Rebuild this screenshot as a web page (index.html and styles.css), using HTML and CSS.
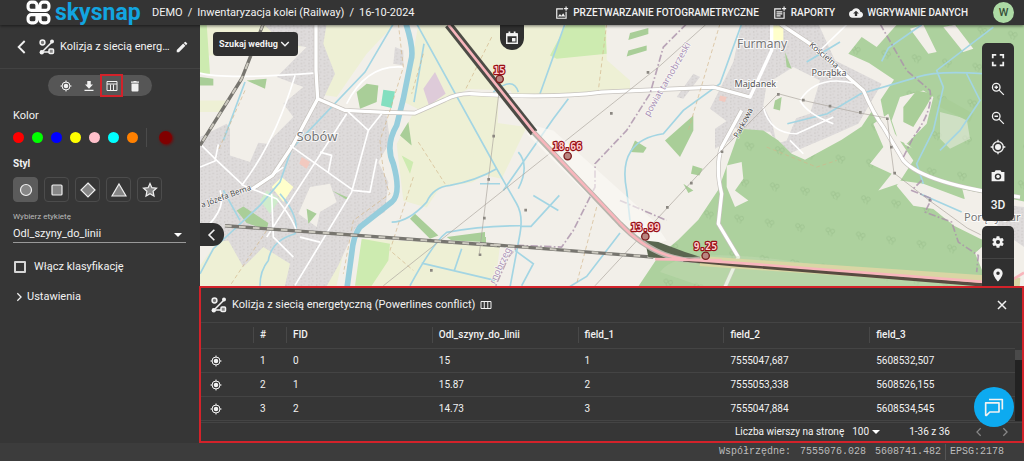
FILE: index.html
```html
<!DOCTYPE html>
<html lang="pl">
<head>
<meta charset="utf-8">
<title>SkySnap</title>
<link rel="stylesheet" href="styles.css">
</head>
<body>
<svg class="defs" aria-hidden="true">
  <symbol id="target" viewBox="0 0 24 24"><circle cx="12" cy="12" r="8" fill="none" stroke="currentColor" stroke-width="2"/><circle cx="12" cy="12" r="4.5" fill="currentColor"/><path d="M12 1v4M12 19v4M1 12h4M19 12h4" stroke="currentColor" stroke-width="2"/></symbol>
  <symbol id="layer" viewBox="0 0 16 16"><g fill="none" stroke="currentColor" stroke-width="1.5"><circle cx="3.5" cy="3.5" r="2.4" fill="#777"/><path d="M3 13 13 3M5 13h5"/><rect x="10" y="10" width="4.5" height="4.5" rx="1" fill="#888"/></g><circle cx="13" cy="2.5" r="2" fill="currentColor"/><circle cx="2.8" cy="13.2" r="2.2" fill="currentColor"/></symbol>
  <symbol id="left" viewBox="0 0 24 24"><path d="M16 3 7 12l9 9" fill="none" stroke="currentColor" stroke-width="2.800"/></symbol>
  <symbol id="right" viewBox="0 0 24 24"><path d="m8 3 9 9-9 9" fill="none" stroke="currentColor" stroke-width="3"/></symbol>
</svg>

<header class="topbar">
  <a class="brand" href="#">
    <svg class="brand-mark" viewBox="0 0 24 24" fill="none" stroke="#fff" stroke-width="3"><path d="M10.500 10H5a3 3 0 0 1-3-3V5a3 3 0 0 1 3-3h2.500a3 3 0 0 1 3 3zM13.500 10H19a3 3 0 0 0 3-3V5a3 3 0 0 0-3-3h-2.500a3 3 0 0 0-3 3zM10.500 14H5a3 3 0 0 0-3 3V19a3 3 0 0 0 3 3h2.500a3 3 0 0 0 3-3zM13.500 14H19a3 3 0 0 1 3 3V19a3 3 0 0 1-3 3h-2.500a3 3 0 0 1-3-3z"/></svg>
    <span class="brand-name">skysnap</span>
  </a>
  <nav class="crumbs"><a href="#">DEMO</a><span>/</span><a href="#">Inwentaryzacja kolei (Railway)</a><span>/</span><a href="#">16-10-2024</a></nav>
  <nav class="actions">
    <a href="#"><svg viewBox="0 0 24 24" fill="none" stroke="currentColor" stroke-width="2"><path d="M14 5H3v16h16V10"/><path d="M19 1v7M15.500 4.500h7"/><path d="m5 18 3.500-4.500 2.500 3 3-4 3.500 5.500z" fill="currentColor" stroke="none"/></svg>PRZETWARZANIE FOTOGRAMETRYCZNE</a>
    <a href="#"><svg viewBox="0 0 24 24" fill="none" stroke="currentColor" stroke-width="2"><path d="M14 5H3v16h16V10"/><path d="M19 1v7M15.500 4.500h7M6 10h10M6 13.500h10M6 17h7"/></svg>RAPORTY</a>
    <a href="#"><svg viewBox="0 0 24 24" fill="currentColor"><path d="M19.350 10.040A7.490 7.490 0 0 0 12 4C9.110 4 6.600 5.640 5.350 8.040A5.994 5.994 0 0 0 0 14c0 3.310 2.690 6 6 6h13c2.760 0 5-2.240 5-5 0-2.640-2.050-4.780-4.650-4.960zM14 13v4h-4v-4H7l5-5 5 5h-3z"/></svg>WGRYWANIE DANYCH</a>
    <button class="avatar">W</button>
  </nav>
</header>

<main class="workspace">
  <aside class="sidebar">
    <div class="layer-head">
      <button class="icon-btn" aria-label="Wstecz"><svg class="i16"><use href="#left"/></svg></button>
      <svg class="i16"><use href="#layer"/></svg>
      <h1>Kolizja z siecią energ…</h1>
      <button class="icon-btn" aria-label="Edytuj"><svg class="i14" viewBox="0 0 24 24" fill="currentColor"><path d="M3 17.250V21h3.750L17.810 9.940l-3.750-3.750L3 17.250zM20.710 7.040a1 1 0 0 0 0-1.410l-2.340-2.340a1 1 0 0 0-1.410 0l-1.830 1.830 3.750 3.750 1.830-1.830z"/></svg></button>
    </div>
    <div class="layer-tools">
      <div class="pill">
        <button aria-label="Centruj"><svg class="i12"><use href="#target"/></svg></button>
        <button aria-label="Pobierz"><svg class="i12" viewBox="0 0 24 24" fill="currentColor"><path d="M20 9h-4.500V2h-7v7H4l8 8.500zM3 19.500h18V22H3z"/></svg></button>
        <button class="marked" aria-label="Tabela"><svg class="i12" viewBox="0 0 24 24" fill="none" stroke="currentColor" stroke-width="2"><path d="M2 3h20v18H2zM2 8h20M9 9v12M15 9v12"/></svg></button>
        <button aria-label="Usuń"><svg class="i12" viewBox="0 0 24 24" fill="currentColor"><path d="M5 7h14v14a2 2 0 0 1-2 2H7a2 2 0 0 1-2-2zM4 3h4.500l1-1h5l1 1H20v2.500H4z"/></svg></button>
      </div>
    </div>
    <section class="settings">
      <h2 class="plain">Kolor</h2>
      <div class="colors">
        <button class="dot red" aria-label="Czerwony"></button><button class="dot green" aria-label="Zielony"></button><button class="dot blue" aria-label="Niebieski"></button><button class="dot yellow" aria-label="Żółty"></button><button class="dot pink" aria-label="Różowy"></button><button class="dot cyan" aria-label="Turkusowy"></button><button class="dot orange" aria-label="Pomarańczowy"></button>
        <span class="rule"></span><button class="dot current" aria-label="Własny kolor"></button>
      </div>
      <h2>Styl</h2>
      <div class="shapes">
        <button class="on" aria-label="Koło"><svg viewBox="0 0 16 16"><circle cx="8" cy="8" r="5.500"/></svg></button>
        <button aria-label="Kwadrat"><svg viewBox="0 0 16 16"><rect x="3" y="3" width="10" height="10" rx="1"/></svg></button>
        <button aria-label="Romb"><svg viewBox="0 0 16 16"><path d="m8 1 7 7-7 7-7-7z"/></svg></button>
        <button aria-label="Trójkąt"><svg viewBox="0 0 16 16"><path d="m8 2 7 12H1z"/></svg></button>
        <button aria-label="Gwiazda"><svg viewBox="0 0 16 16"><path d="m8 1.500 1.900 4.200 4.600.5-3.400 3.100.9 4.700-4-2.300L4 14l.9-4.700L1.500 6.200l4.600-.5z"/></svg></button>
      </div>
      <label class="field-label" for="label">Wybierz etykietę</label>
      <div class="select-wrap"><select id="label"><option>Odl_szyny_do_linii</option></select><i class="caret"></i></div>
      <label class="check"><input type="checkbox">Włącz klasyfikację</label>
      <button class="more"><svg class="i10"><use href="#right"/></svg>Ustawienia</button>
    </section>
  </aside>

  <div class="content">
    <div class="map">
      <svg class="canvas" viewBox="0 3 2472 783" preserveAspectRatio="xMidYMid slice">
        <defs>
          <pattern id="specks" width="23" height="19" patternUnits="userSpaceOnUse"><rect width="23" height="19" fill="#dedbdb"/><path d="M3 3h4v5H3zM14 10h5v4h-5zM12 1h3v4h-3zM4 13h4v3H4z" fill="#d1cdcc"/></pattern>
          <pattern id="trees" width="92" height="110" patternUnits="userSpaceOnUse" patternTransform="rotate(8)"><rect width="92" height="110" fill="#add19e"/><g fill="none" stroke="#98bf8a" stroke-width="2"><circle cx="20" cy="20" r="6"/><circle cx="34" cy="22" r="6"/><path d="M20 26l5 10M34 28l-2 10"/></g></pattern>
        </defs>
        <rect y="-40" width="2472" height="880" fill="#f2efe9"/>
        <!-- fields -->
        <g class="farm">
          <path d="M0 0h325v60L230 95H0zM0 230h85L60 265H0zM370 0h215L500 90l-90 130-60-10-8-80z"/>
          <path d="M655 0h565l-65 208-350-12-130 70-60-30z"/>
          <path d="M640 268l160-62 95 10-5 220-75 40-95 15-40 60-70-20-20-170z"/>
          <path d="M80 615l360 25-30 146H0v-60zM490 645l410 20-15 121H470z"/>
          <path d="M1220 0v205l-280 15-90-220zM840 290l-30 155 95 20 75-155z"/>
          <path d="M1070 120l140-20 80 70v35l-220 10z"/>
        </g>
        <g class="meadow">
          <path d="M0 0h20l10 150H0zM485 645l85 15-5 50-50 76h-50zM1100 0h115l5 90-150 15-20-10zM605 395l35 20-10 35z"/>
        </g>
        <!-- built-up areas -->
        <g fill="url(#specks)">
          <path d="M190 0h190l-10 60 35 90-35 75 80 35 110 15 10 80-35 60 30 60-10 90-90 50-50 110-70 125H240l30-130-80-50-60 60-45-80-85 10V420l120-70 80 10 80-80-30-40 60-50-80-30 90-90-70-10z"/>
          <path d="M585 70l25 10v45l-30-5zM1625 0h230l50 110 140 70-70 120-90 40-130 55-45-70-100-10-80-60 70-140z"/>
          <path d="M1480 150l20 10-50 65-20-5zM1545 315l45-30 10 60-55 30z"/>
          <path d="M0 340l80-40 35 55-30 60-85 20z"/>
        </g>
        <g fill="#f2efe9">
          <path d="M90 300l50-60 70 35-60 140-60-20zM330 490l60-10 20 55-50 30-10 45-55-40zM1700 180l80-50 80 40-30 100-110 35-30-60zM1715 290l65-70 10 60-30 70-30 10z"/>
        </g>
        <!-- forest -->
        <g fill="url(#trees)">
          <path d="M1620 315l70 5 45 30 40 40 40 18 110-60 60-40 30-45 80 60 20 40 100 45 60 40 20 80 110 90-80 70 60 145H1285l90-135 60-50 60-60 60-90z"/>
          <path d="M1945 90l40-50 45 30 60-67h382v530l-150-30-55-10-90-50-30-60-90-80-15-75 40-60-75-50z"/>
        </g>
        <g fill="#f2efe9">
          <path d="M2130 15l55 75 25-5-40-82zM2230 10l60 75 30-10-55-72zM2020 300l45-30 20 60 55 80-45 70-60 20 40-50-65-30 40-50zM2100 220l70-20 30 20-20 80-60 60-25-10-20-60zM1580 425l45-10 5 50-25 35 40 30-40 20-25-60z"/>
          <path d="M2100 470l70 10 120 45 182 15v146l-130-40-80-40-62-50-60-10-50-60z"/>
          <path d="M2220 265l80 20 10 60-60 30-30-30z" opacity=".5"/>
        </g>
        <path d="M2345 535l127 15v120l-70-50z" fill="url(#specks)"/>
        <g class="wood">
          <path d="M500 180l35 5-5 50-50 20-10-50zM625 295l10 70-35-30zM140 170l60-5-5 30zM740 640l115-15v30l-100-5zM320 555l30 15-25 30zM110 560l20-12 75 50-5 20-60-20zM645 570l70 65-25 10-60-60zM395 500l50 22-5 6z"/>
          <path d="M1290 28l55-15v18l-60 18zM1285 80l55-15v15l-60 18zM1290 385l15-35 35 22-10 15zM1395 350l85-75v45l-40 80zM1478 425l30 10-10 20-25-5zM1450 480l30 20-15 8zM1755 85l20 50-15-5zM1725 230l20-10-5 40-20-5zM0 160l40 5v20H0zM840 640h18v25h-18z"/>
          <path d="M2110 250l40-50 50 10-20 35-40 65-30-15zM2230 220l90 50-10 25-100-50z"/>
        </g>
        <path d="M550 198l35 5-10 50-32-8z" fill="#83dfc0"/>
        <path d="M670 195l35-50 32 65-50 35z" fill="#decbd9"/>
        <path d="M215 490l30-30 35 30-30 45zM1712 5h38v45h-38z" fill="#ffffcb"/>
        <path d="M305 400l25 15-10 20-22-15zM1560 215l20 5-5 15-18-5z" fill="#f2c9bf"/>
        <path d="M180 530l20-30 40 25-30 45z" fill="#cfeccc"/>
        <!-- water -->
        <g class="water">
          <path class="river" d="M618 0q25 80 15 110l-23 115-20 80q-35 60-10 115 25 90-5 115l-95 75q-20 25-25 80l-15 110"/>
          <path d="M580 0l-85 145-220 230-35 100-60 70L40 675 0 750M70 500l50 90M650 0l240 435 60 105q20 35 10 90l-30 160M672 60l-30 175M575 595q50 0 105-60 20-45 70-50 80-15 140-50M630 786q70-130 110-160 100-20 220-20M665 718l220 52M785 675l-22 65M135 175L70 350M240 510q60 70 45 120-70 20-80 80-25 30-25 76"/>
          <path d="M1095 0l-75 210M1105 225l-45 60-150 215M955 385q35 40 0 110M840 480h60M1000 515l75 45M1078 515l-85 93h-33M1260 628l-100 130-50 30M945 680l55 40-35 66M1625 0l-65 180-110 80-60 70q-140 20-110 170l10 90M880 205q60-50 75 0"/>
          <path d="M2165 3l-100 70-20 40M2380 10L2210 140l20 50-30 130-50 100 20 60M2352 150q-140-10-200 10l-170 50-100 60-120 30M2300 150l40 80-60 90-60 60M1820 115l100-60M2160 510l125 55"/>
        </g>
        <!-- roads -->
        <g class="road-edge"><path d="M348 0v140l5 85 82 35 120 6 90 2 90-40q40-20 80-18 240 15 390-5l335-15 110 30M353 225l-75 140-60 90-60 40M1740 0l90 60 160 140q30 70 60 110l60 100q60 70 350 110M1625 260l-60 110q-20 60 0 140l-10 90 60 100-40 90"/></g>
        <g class="road"><path d="M348 0v140l5 85 82 35 120 6 90 2 90-40q40-20 80-18 240 15 390-5l335-15 110 30 65-140V0M353 225l-75 140-60 90-60 40M1740 0l90 60 160 140q30 70 60 110l60 100q60 70 350 110M1625 260l-60 110q-20 60 0 140l-10 90 60 100-40 90"/></g>
        <g class="street"><path d="M0 148q70 20 340 0M285 155q-60 200-160 330M0 360l50 50 80 75 100 40q50 60 60 100M0 430l45-18 10-50M440 270l-240 370M440 260l65 60 40-50M505 320l-50 185-170 280M270 365l190 135 50 5 20-100M360 385l35 10-10 50M215 510l5 130 60 60M300 640l60 15M170 490l80-60M440 240q60-120 170-110M1800 230q50-80 170-50M1800 230q20 40 100 70M1690 250q20 80 100 80l110-50M1770 350l40 40M1850 90l90-87M20 610q60-60 40-110"/></g>
        <!-- footpaths and boundaries -->
        <g class="path"><path d="M595 0l15 130-40 130-30 90q10 120 30 160l-110 80-30 160M655 355l80 125M640 460l-70 220 70 60M135 200L55 380M200 620L90 786M1220 0l-25 200M1560 0l-95 320M1190 550l-60 230M670 90l-35 120M875 40l-80 160M1700 370l150 60 60-20"/></g>
        <g class="power"><path d="M900 180l-62 510M550 786l830-660 140-126M1735 210l-210 210-340 366M1735 210l75 20 80 18 90 20 82 15 10 90 10 75 110 85 110 80 40 20"/></g>
        <g fill="#8b8781"><path d="M877 333h8v8h-8zM862 463h8v8h-8zM849 579h8v8h-8zM836 689h8v8h-8zM690 736h8v8h-8zM1230 265h8v8h-8zM973 555h8v8h-8zM1340 142h8v8h-8zM1562 380h8v8h-8zM1470 474h8v8h-8zM1398 547h8v8h-8zM1731 208h8v8h-8zM1806 225h8v8h-8zM1886 243h8v8h-8zM1977 262h8v8h-8zM2058 281h8v8h-8zM2070 366h8v8h-8zM2080 444h8v8h-8zM2186 525h8v8h-8z"/></g>
        <g class="border"><path d="M1460 0l-70 70-40 140-70 110-95 100v70l-65 130-35 50-130-5-30 35-40 90M2040 0l80 140 70 60q10 60-50 140l-30 60M2165 470l-30 30 60 25-20 40 80 30 20 60 60 40-5 50M1260 530l140 60"/></g>
        <!-- railways -->
        <path class="rail" d="M190 0l-65 165L0 365M75 606l825 60M840 660l520 40"/>
        <path class="rail-dash" d="M190 0l-65 165L0 365M75 606l825 60M840 660l520 40"/>
        <path d="M980 330l20-25 60 15 300 270 40 60-60 20-190-170z" fill="#fbfaf7" opacity=".6"/>
        <path d="M1335 650l40 5 80 30 80 25-30 10-160-20z" fill="#5a6650"/>
        <path d="M1380 745q60-90 480-20l490 35v26H1500z" fill="#c5dcb5" opacity=".4"/>
        <path d="M745 3L1002 327" stroke="#4c4c46" stroke-width="25"/>
        <path d="M1000 325l260 275q120 120 240 108" fill="none" stroke="#b8b4ac" stroke-width="16"/>
        <path d="M1500 712l960 65" fill="none" stroke="#d9d6a4" stroke-width="30"/>
        <path d="M1450 708l170 16 740 60" fill="none" stroke="#574b40" stroke-width="11"/>
        <path d="M745 3l255 320 260 275q100 112 240 112l120 8 740 57M1365 706l200 4M2430 772l42-25" class="track"/>
        <!-- place names -->
        <g class="place"><text x="351" y="352" font-size="39">Sobów</text><text x="1686" y="74" font-size="36">Furmany</text><text x="2377" y="592" font-size="33">Poręby-Fur</text></g>
        <g class="hamlet"><text x="1666" y="191">Majdanek</text><text x="1887" y="157">Porąbka</text></g>
        <g class="streetname"><text transform="translate(6 552)rotate(-20)">a Józefa Bema</text><text transform="translate(1614 344)rotate(-62)">Parkowa</text><text transform="translate(1826 66)rotate(40)">Kościelna</text></g>
        <g class="county"><text transform="translate(1347 280)rotate(-60)">powiat tarnobrzeski</text><text transform="translate(884 782)rotate(-65)">rnobrzeg</text></g>
        <!-- measurements -->
        <g class="point"><circle cx="899" cy="166" r="11"/><circle cx="1103" cy="397" r="11"/><circle cx="1336" cy="638" r="11"/><circle cx="1517" cy="696" r="11"/></g>
        <g class="value"><text x="898" y="150">15</text><text x="1102" y="380">18.66</text><text x="1336" y="622">13.99</text><text x="1516" y="679">9.25</text></g>
      </svg>
      <button class="search-by">Szukaj według<svg class="i10" viewBox="0 0 24 24"><path d="m3 7 9 9 9-9" fill="none" stroke="currentColor" stroke-width="3.500"/></svg></button>
      <button class="calendar" aria-label="Kalendarz"><svg class="i14" viewBox="0 0 24 24"><path d="M3 5h18v16H3z" fill="none" stroke="currentColor" stroke-width="2.500"/><path d="M3 4h18v5H3zM6 1h3v4H6zM15 1h3v4h-3zM12 12h6v6h-6z" fill="currentColor"/></svg></button>
      <button class="collapse" aria-label="Zwiń"><svg class="i14"><use href="#left"/></svg></button>
      <div class="map-tools">
        <div class="group">
          <button aria-label="Pełny ekran"><svg viewBox="0 0 24 24" fill="none" stroke="currentColor" stroke-width="3"><path d="M3 9V3h6M15 3h6v6M21 15v6h-6M9 21H3v-6"/></svg></button>
          <button aria-label="Przybliż"><svg viewBox="0 0 24 24" fill="none" stroke="currentColor" stroke-width="2.200"><circle cx="9" cy="9" r="6.500"/><path d="m14 14 8 8M6 9h6M9 6v6"/></svg></button>
          <button aria-label="Oddal"><svg viewBox="0 0 24 24" fill="none" stroke="currentColor" stroke-width="2.200"><circle cx="9" cy="9" r="6.500"/><path d="m14 14 8 8M6 9h6"/></svg></button>
          <button aria-label="Moja pozycja"><svg class="locate"><use href="#target"/></svg></button>
          <button aria-label="Zrzut"><svg viewBox="0 0 24 24"><path d="M8 2 6 5H1v16h22V5h-5l-2-3zM12 7.500a5.500 5.500 0 1 1 0 11 5.500 5.500 0 0 1 0-11z" fill="currentColor" fill-rule="evenodd"/><circle cx="12" cy="13" r="3" fill="currentColor"/></svg></button>
          <button>3D</button>
        </div>
        <div class="group second">
          <button aria-label="Ustawienia mapy"><svg viewBox="0 0 24 24" fill="currentColor"><path d="M19.430 12.980a7.800 7.800 0 0 0 0-1.960l2.110-1.650c.19-.15.24-.42.12-.64l-2-3.460a.5.5 0 0 0-.61-.22l-2.490 1a7.300 7.300 0 0 0-1.690-.98l-.38-2.650A.49.49 0 0 0 14 2h-4a.49.49 0 0 0-.49.420l-.38 2.650c-.61.250-1.170.590-1.690.980l-2.490-1a.5.5 0 0 0-.61.220l-2 3.460a.5.5 0 0 0 .12.640l2.110 1.650a7.900 7.900 0 0 0 0 1.960l-2.110 1.650a.5.5 0 0 0-.12.640l2 3.460c.12.220.39.300.61.220l2.490-1c.52.400 1.080.730 1.690.980l.38 2.650c.03.240.24.420.49.420h4c.25 0 .46-.18.49-.42l.38-2.650a7.300 7.300 0 0 0 1.690-.98l2.490 1c.23.090.49 0 .61-.22l2-3.460a.5.5 0 0 0-.12-.64zM12 15.500a3.500 3.500 0 1 1 0-7 3.500 3.500 0 0 1 0 7z"/></svg></button>
          <button aria-label="Znacznik"><svg viewBox="0 0 24 24" fill="currentColor"><path d="M12 1a8 8 0 0 0-8 8c0 6 8 14 8 14s8-8 8-14a8 8 0 0 0-8-8zm0 11a3 3 0 1 1 0-6 3 3 0 0 1 0 6z"/></svg></button>
        </div>
      </div>
    </div>

    <section class="panel">
      <div class="panel-head">
        <svg class="i16"><use href="#layer"/></svg>
        <h2>Kolizja z siecią energetyczną (Powerlines conflict)</h2>
        <button class="icon-btn" aria-label="Kolumny"><svg class="i12" viewBox="0 0 24 24" fill="none" stroke="currentColor" stroke-width="2"><path d="M2 5h20v14H2zM8.500 5v14M15.500 5v14"/></svg></button>
        <button class="icon-btn close" aria-label="Zamknij"><svg class="i12" viewBox="0 0 24 24"><path d="m4 4 16 16M20 4 4 20" stroke="currentColor" stroke-width="3"/></svg></button>
      </div>
      <div class="table-area">
        <table>
          <colgroup><col class="c-icon"><col class="c-num"><col><col><col><col><col></colgroup>
          <thead><tr><th></th><th>#</th><th>FID</th><th>Odl_szyny_do_linii</th><th>field_1</th><th>field_2</th><th>field_3</th></tr></thead>
          <tbody>
            <tr><td><button class="icon-btn" aria-label="Pokaż 1"><svg class="i12"><use href="#target"/></svg></button></td><td>1</td><td>0</td><td>15</td><td>1</td><td>7555047,687</td><td>5608532,507</td></tr>
            <tr><td><button class="icon-btn" aria-label="Pokaż 2"><svg class="i12"><use href="#target"/></svg></button></td><td>2</td><td>1</td><td>15.87</td><td>2</td><td>7555053,338</td><td>5608526,155</td></tr>
            <tr><td><button class="icon-btn" aria-label="Pokaż 3"><svg class="i12"><use href="#target"/></svg></button></td><td>3</td><td>2</td><td>14.73</td><td>3</td><td>7555047,884</td><td>5608534,545</td></tr>
          </tbody>
        </table>
        <div class="scrollbar"><span></span></div>
      </div>
      <div class="pager">
        <label for="rows">Liczba wierszy na stronę</label>
        <div class="rows-wrap"><select id="rows"><option>100</option></select><i class="caret"></i></div>
        <span class="range">1-36 z 36</span>
        <button class="icon-btn" aria-label="Poprzednia" disabled><svg class="i10"><use href="#left"/></svg></button>
        <button class="icon-btn" aria-label="Następna" disabled><svg class="i10"><use href="#right"/></svg></button>
      </div>
      <button class="chat" aria-label="Czat"><svg viewBox="0 0 24 24" fill="none" stroke="currentColor" stroke-width="2" stroke-linejoin="round"><path d="M2 7h16v11H7l-4 4H2zM6 3h16v12"/></svg></button>
    </section>
  </div>
</main>

<footer class="status"><span>Współrzędne:</span><span>7555076.028</span><span>5608741.482</span><span class="epsg">EPSG:2178</span></footer>
</body>
</html>
```
FILE: styles.css
```css
* { box-sizing: border-box; }
body {
  margin: 0;
  min-height: 100vh;
  display: flex;
  flex-direction: column;
  background: #363636;
  color: #f2f2f2;
  font: 11px/16px Roboto, "Noto Sans", sans-serif;
}
button, select { font: inherit; color: inherit; background: none; border: 0; padding: 0; }
button { display: flex; align-items: center; justify-content: center; }
a { color: inherit; text-decoration: none; }
h1, h2 { margin: 0; font-size: 11px; font-weight: 400; }
svg { display: block; flex: none; }
.defs { position: absolute; width: 0; height: 0; }
.i10 { width: 10px; height: 10px; }
.i12 { width: 12px; height: 12px; }
.i14 { width: 14px; height: 14px; }
.i16 { width: 16px; height: 16px; }

.topbar {
  display: flex;
  align-items: center;
  height: 25px;
  padding: 0 10px 0 26px;
  position: relative;
  z-index: 2;
  background: #343434;
  box-shadow: 0 1px 3px #0008;
}
.brand { display: flex; align-items: center; gap: 4px; width: 126px; }
.brand-mark { width: 25px; height: 25px; }
.brand-name { color: #12a5e0; font: 700 23px/20px Roboto, sans-serif; }
.crumbs { display: flex; gap: 5px; white-space: nowrap; }
.actions { display: flex; align-items: center; margin-left: auto; gap: 14px; font-size: 10px; font-weight: 500; white-space: nowrap; }
.actions a { display: flex; align-items: center; gap: 4px; }
.actions svg { width: 14px; height: 14px; }
.avatar { width: 21px; height: 21px; margin-left: 11px; border-radius: 50%; background: #addaa5; color: #38503a; font-size: 11px; }

.workspace { flex: 1; display: flex; }
.sidebar { flex: 0 0 200px; min-width: 0; }
.layer-head { display: flex; align-items: center; height: 44px; padding: 0 14px; gap: 5px; border-bottom: 1px solid #424242; }
.layer-head > button:first-child { margin-right: 4px; }
.layer-head h1 { flex: 1; white-space: nowrap; }
.layer-tools { display: flex; justify-content: center; padding-top: 6px; }
.pill { display: flex; align-items: center; justify-content: space-around; width: 104px; height: 21px; padding: 0 6px; border-radius: 11px; background: #565656; }
.pill button { width: 23px; height: 23px; }
.pill .marked { border: 2px solid #d3222a; }
.settings { padding: 11px 13px; }
.settings h2 { font-weight: 700; font-size: 10px; line-height: 18px; }
.settings h2.plain { font-weight: 400; font-size: 11px; }
.colors { display: flex; align-items: center; gap: 8px; height: 19px; margin: 3px 0 8px; }
.dot { width: 11px; height: 11px; border-radius: 50%; }
.red { background: #f00; } .green { background: #0f0; } .blue { background: #00f; } .yellow { background: #ff0; }
.pink { background: #ffc0cb; } .cyan { background: #0ff; } .orange { background: #ff8000; }
.rule { width: 1px; height: 19px; background: #4b4b4b; }
.current { width: 13px; height: 13px; margin-left: 4px; background: #800000; box-shadow: 1px 1px 3px #800000; }
.shapes { display: flex; gap: 6px; margin: 4px 0 7px; }
.shapes button { width: 25px; height: 25px; border: 1px solid #4c4c4c; border-radius: 4px; }
.shapes .on { background: #5b5b5b; border-color: #5b5b5b; }
.shapes svg { width: 16px; height: 16px; fill: #868686; stroke: #f0f0f0; stroke-width: 1.2; }
.field-label { display: block; font-size: 8px; color: #bbb; }
.select-wrap { position: relative; width: 173px; border-bottom: 1px solid #999; }
.select-wrap select { display: block; width: 100%; height: 17px; appearance: none; }
.caret { position: absolute; right: 4px; top: 8px; border: 4px solid transparent; border-top-color: #fff; pointer-events: none; }
.check { display: flex; align-items: center; gap: 7px; margin-top: 16px; }
.check input { appearance: none; width: 12px; height: 12px; margin: 0 1px; border: 2px solid #d6d6d6; border-radius: 1px; }
.more { gap: 3px; margin: 14px 0 0 1px; }

.content { flex: 1; min-width: 0; display: flex; flex-direction: column; }
.map { flex: 1; min-height: 0; position: relative; overflow: hidden; background: #f2efe9; }
.canvas { position: absolute; inset: 0; width: 100%; height: 100%; font-family: "Noto Sans", sans-serif; }
.farm { fill: #eef0d5; }
.meadow { fill: #cdebb0; }
.wood { fill: #a9ce98; }
.water { fill: none; stroke: #a3d5e3; stroke-width: 5; }
.river { stroke-width: 17; stroke: #96cddc; }
.road-edge, .road, .street, .path, .power, .border, .track, .rail, .rail-dash { fill: none; stroke-linejoin: round; }
.road-edge { stroke: #c6c2bd; stroke-width: 14; }
.road { stroke: #fff; stroke-width: 10; }
.street { stroke: #fff; stroke-width: 5; }
.path { stroke: #d1b58a; stroke-width: 2; stroke-dasharray: 12 8; }
.power { stroke: #aaa59d; stroke-width: 2; }
.border { stroke: #aa91aa; stroke-width: 5; stroke-dasharray: 22 7 5 7; opacity: .8; }
.rail { stroke: #77756f; stroke-width: 10; }
.rail-dash { stroke: #ccc9bf; stroke-width: 6; stroke-dasharray: 20 22; }
.track { stroke: #f8b6bc; stroke-width: 8; }
.place, .hamlet { text-anchor: middle; fill: #777; stroke: #fffc; stroke-width: 6; paint-order: stroke; }
.hamlet { font-size: 27px; fill: #555; }
.streetname { font-size: 24px; fill: #484848; stroke: #fffb; stroke-width: 4; paint-order: stroke; }
.county { font-size: 27px; fill: #aa91b5; stroke: #fff9; stroke-width: 4; paint-order: stroke; }
.point { fill: #b98580; stroke: #7d1d1f; stroke-width: 4; }
.value { font: 700 29px "DejaVu Sans Mono", monospace; text-anchor: middle; fill: #ffd0d0; stroke: #970f16; stroke-width: 7; paint-order: stroke; stroke-linejoin: round; }

.search-by, .calendar, .collapse, .map-tools { position: absolute; }
.search-by { left: 13px; top: 7px; height: 24px; padding: 0 8px 0 6px; gap: 2px; border-radius: 4px; background: #303030; font-size: 9px; font-weight: 700; }
.calendar { left: 38%; top: 0; width: 24px; height: 25px; margin-left: -13px; border-radius: 0 0 12px 12px; background: #303030; }
.collapse { left: 0; top: 198px; width: 24px; height: 23px; border-radius: 0 11px 11px 0; background: #303030; }
.map-tools { right: 10px; top: 18px; display: flex; flex-direction: column; gap: 5px; }
.group { width: 32px; padding: 2px 0; border-radius: 5px; background: #303030; font-size: 12px; font-weight: 500; }
.group button { width: 32px; height: 29px; }
.group svg { width: 14px; height: 14px; }
.group .locate { width: 16px; height: 16px; }
.second { padding: 0; }
.second button { height: 32px; }
.second button + button { border-top: 1px solid #444; }

.panel { position: relative; z-index: 1; margin-left: -1px; border: 2px solid #d3222a; background: #363636; }
.panel-head { display: flex; align-items: center; gap: 5px; height: 35px; padding: 0 14px 0 10px; border-bottom: 1px solid #444; }
.close { margin-left: auto; }
.table-area { display: flex; }
table { flex: 1; width: 0; border-collapse: collapse; table-layout: fixed; font-size: 10px; }
.c-icon { width: 52px; }
.c-num { width: 33px; }
th, td { height: 24px; padding: 0 7px; text-align: left; border-bottom: 1px solid #444; line-height: 16px; }
th { height: 26px; font-weight: 500; background: linear-gradient(#484848, #484848) left center / 1px 16px no-repeat; }
th:first-child { background: none; }
td:first-child { padding: 0 9px; }
.scrollbar { width: 7px; margin-top: 27px; background: #222; }
.scrollbar span { display: block; height: 10px; background: #4a4a4a; }
.pager { display: flex; align-items: center; justify-content: flex-end; height: 19px; margin-top: 1px; padding-right: 12px; border-top: 1px solid #444; font-size: 10px; }
.rows-wrap { position: relative; width: 27px; margin: 0 30px 0 8px; }
.rows-wrap select { display: block; width: 27px; appearance: none; }
.range { margin-right: 24px; }
.pager button { width: 10px; margin-left: 16px; color: #888; }
.pager .range + button { margin-left: 0; }
.rows-wrap .caret { top: 6px; right: -1px; }
.chat { position: absolute; right: 8px; bottom: 14px; width: 40px; height: 40px; border-radius: 50%; background: #0daaf0; }
.chat svg { width: 20px; height: 20px; }

.status { display: flex; justify-content: flex-end; align-items: center; gap: 9px; height: 18px; padding-right: 20px; background: #3c3c3c; color: #bbb; font: 10px/16px "Liberation Mono", monospace; }
.epsg { padding-left: 4px; margin-left: -5px; border-left: 1px solid #555; }
```
